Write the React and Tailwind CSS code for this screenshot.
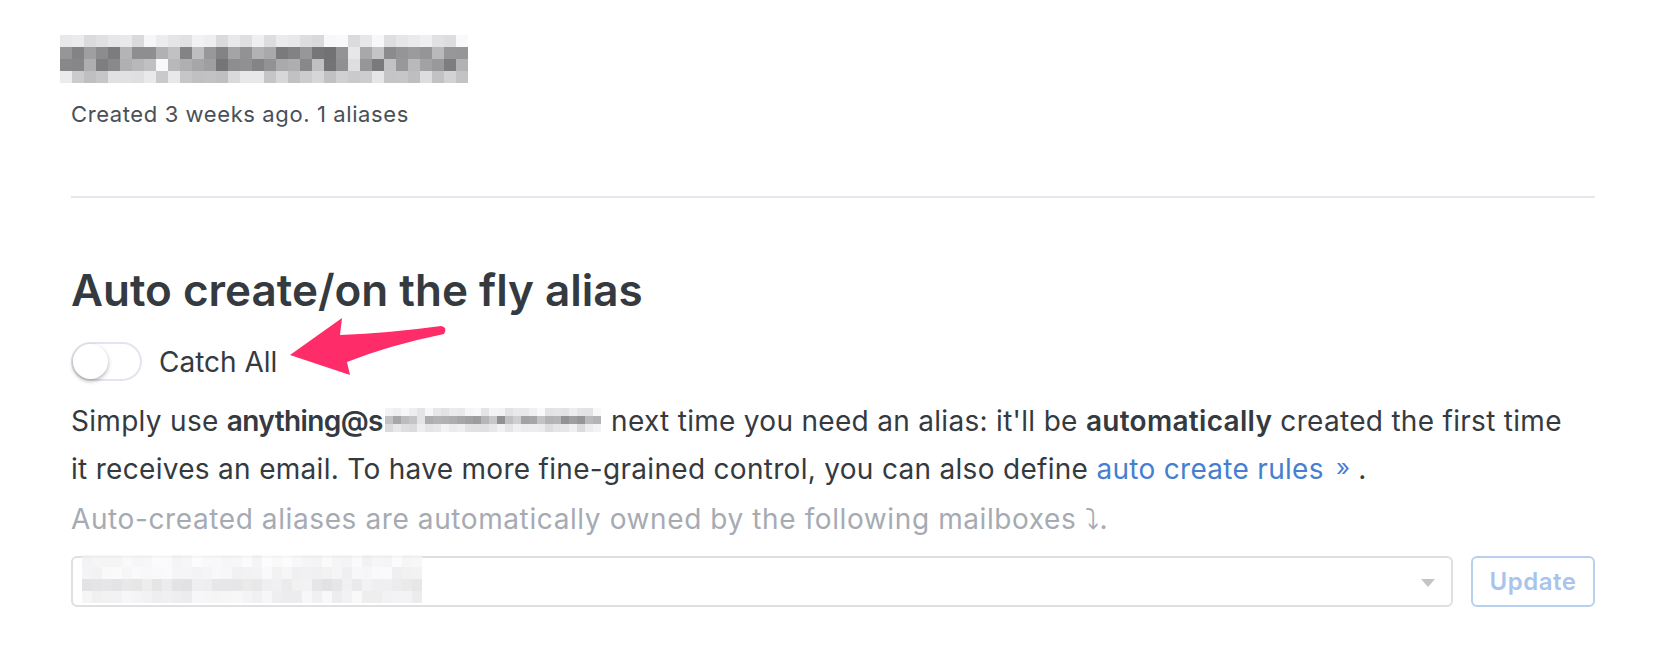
import React from "react";

function rng(seed) {
  let s = seed;
  return () => {
    s = (s * 9301 + 49297) % 233280;
    return s / 233280;
  };
}

function Mosaic({ cols, rows, cell, cellH, seed, ranges, gaps = [] }) {
  const r = rng(seed);
  const h = cellH || cell;
  const cells = [];
  for (let y = 0; y < rows; y++) {
    for (let x = 0; x < cols; x++) {
      const [lo, hi] = ranges[y];
      let v = Math.round(lo + (hi - lo) * r());
      if (gaps.includes(x) && y > 0 && y < rows - 1) v = Math.min(255, v + 60);
      cells.push(
        <div
          key={y + "-" + x}
          style={{ backgroundColor: `rgb(${v},${v},${Math.min(255, v + 2)})`, width: cell, height: h }}
        />
      );
    }
  }
  return (
    <div
      className="grid"
      style={{ gridTemplateColumns: `repeat(${cols}, ${cell}px)`, width: cols * cell }}
    >
      {cells}
    </div>
  );
}

export default function App() {
  return (
    <div className="relative w-[1676px] h-[672px] bg-white font-['Inter',sans-serif] text-[#343a40]">
      <div className="pl-[71px] pr-[81px] pt-[35px]">
        <div className="-ml-[11px]">
          <Mosaic
            cols={34}
            rows={4}
            cell={12}
            seed={7}
            gaps={[8, 24]}
            ranges={[
              [215, 250],
              [110, 200],
              [115, 195],
              [190, 240],
            ]}
          />
        </div>
        <p className="mt-[18px] text-[22px] leading-[26px] tracking-[0.6px] text-[#495057]">
          Created 3 weeks ago. 1 aliases
        </p>
        <div className="mt-[69px] h-[2px] bg-[#e3e7ee]" />
        <h2 className="mt-[66px] text-[44px] leading-[52px] font-semibold text-[#343a40]">
          Auto create/on the fly alias
        </h2>
        <div className="mt-[26px] flex items-center gap-[17px]">
          <div className="relative w-[71px] h-[39px] rounded-full border-2 border-[#e2e6ec] bg-white">
            <div className="absolute left-[0px] top-[0px] w-[35px] h-[35px] rounded-full bg-white shadow-[0_2px_4px_rgba(0,0,0,0.3)]" />
          </div>
          <span className="text-[28px] leading-[34px] text-[#343a40]">Catch All</span>
        </div>
        <div className="mt-[16px] text-[28px] leading-[48px] tracking-[0.3px] text-[#343a40]">
          <p>
            Simply use <b className="font-semibold tracking-[-0.6px]">anything@s</b>
            <span className="inline-block align-middle mx-[2px] -mt-[6px]">
              <Mosaic
                cols={27}
                rows={3}
                cell={8}
                seed={13}
                gaps={[4, 16]}
                ranges={[
                  [225, 250],
                  [145, 200],
                  [215, 245],
                ]}
              />
            </span>{" "}
            next time you need an alias: it'll be <b className="font-semibold">automatically</b> created the
            first time
            <br />
            it receives an email. To have more fine-grained control, you can also define{" "}
            <a className="text-[#467fcf]">
              auto create rules <span className="text-[24px] relative -top-[3px] ml-[4px]">»</span>
            </a>
            <span className="ml-[8px]">.</span>
          </p>
          <p className="text-[#a6abb3] tracking-[0.6px]">
            Auto-created aliases are automatically owned by the following mailboxes ⤵.
          </p>
        </div>
        <div className="mt-[13px] flex items-center gap-[18px]">
          <div className="relative flex-1 h-[51px] rounded-[6px] border-2 border-[#dfdfdf] bg-white">
            <div className="absolute left-[9px] -top-[3px] opacity-80">
              <Mosaic
                cols={34}
                rows={4}
                cell={10}
                cellH={12}
                seed={21}
                ranges={[
                  [240, 252],
                  [236, 250],
                  [220, 240],
                  [232, 248],
                ]}
              />
            </div>
            <div className="absolute right-[16px] top-[21px] w-0 h-0 border-l-[7px] border-r-[7px] border-t-[8px] border-l-transparent border-r-transparent border-t-[#c4c4c4]" />
          </div>
          <button className="w-[124px] h-[51px] rounded-[6px] border-2 border-[#b8d0f0] text-[#a8c4ec] text-[24px] font-semibold tracking-[0.5px]">
            Update
          </button>
        </div>
      </div>
      <svg
        className="absolute left-[280px] top-[307px]"
        width="175"
        height="80"
        viewBox="0 0 175 80"
      >
        <path
          d="M10 48 L62 11 L60 28 Q110 26 161 19 Q168 20 164 27 Q110 38 67 55 L70 68 Z"
          fill="#fe2d6a"
        />
      </svg>
    </div>
  );
}
